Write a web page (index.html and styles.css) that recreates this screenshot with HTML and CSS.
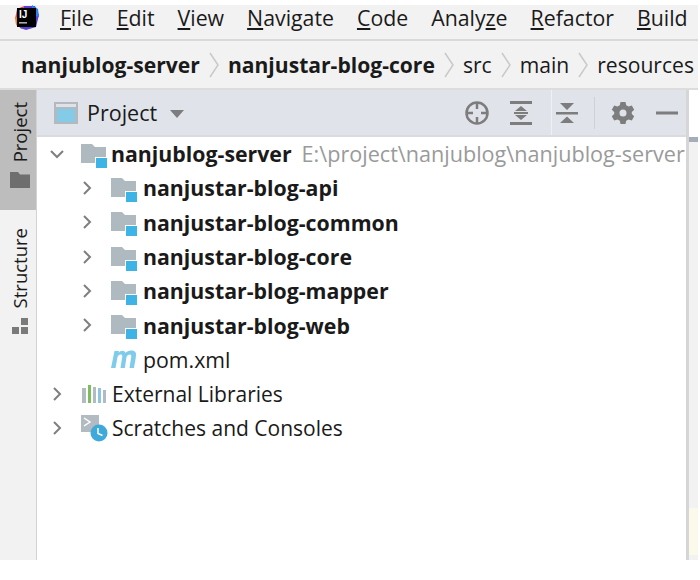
FILE: index.html
```html
<!DOCTYPE html>
<html lang="en">
<head>
<meta charset="utf-8">
<title>Project</title>
<link rel="stylesheet" href="styles.css">
</head>
<body>
<div class="window">
  <header class="menubar">
    <svg class="logo" width="28" height="26" viewBox="0 0 28 26">
      <path d="M5 4 L12 1 L10 12 L3 14 Z" fill="#f0433f"/>
      <path d="M3 13 L9 10 L10 24 L4 20 Z" fill="#f58220"/>
      <path d="M12 1 L23 1 L27 10 L24 22 L14 25 L8 23 Z" fill="#5b3fd6"/>
      <path d="M20 0 L26 4 L27 12 L20 10 Z" fill="#2f7fe8"/>
      <rect x="5" y="3" width="19" height="19" fill="#000"/>
      <text x="7" y="13" class="logo-text">IJ</text>
      <rect x="7" y="17" width="8" height="1.6" fill="#aaa"/>
    </svg>
    <nav class="menu">
      <span><u>F</u>ile</span><span><u>E</u>dit</span><span><u>V</u>iew</span><span><u>N</u>avigate</span><span><u>C</u>ode</span><span>Analy<u>z</u>e</span><span><u>R</u>efactor</span><span><u>B</u>uild</span>
    </nav>
  </header>
  <div class="crumbs">
    <b>nanjublog-server</b>
    <svg class="sep" width="12" height="26" viewBox="0 0 12 26"><path d="M2 1 L10 13 L2 25" /></svg>
    <b>nanjustar-blog-core</b>
    <svg class="sep" width="12" height="26" viewBox="0 0 12 26"><path d="M2 1 L10 13 L2 25" /></svg>
    <span>src</span>
    <svg class="sep" width="12" height="26" viewBox="0 0 12 26"><path d="M2 1 L10 13 L2 25" /></svg>
    <span>main</span>
    <svg class="sep" width="12" height="26" viewBox="0 0 12 26"><path d="M2 1 L10 13 L2 25" /></svg>
    <span>resources</span>
  </div>
  <div class="workspace">
    <aside class="rail">
      <div class="rail-tab active">
        <span class="rail-label">Project</span>
        <svg width="20" height="16" viewBox="0 0 20 16"><path d="M0 0 H8 L10 2.500 H20 V16 H0 Z" fill="#6e6e6e"/></svg>
      </div>
      <div class="rail-tab">
        <span class="rail-label">Structure</span>
        <svg width="17" height="17" viewBox="0 0 17 17"><path d="M9 0 H16 V7 H9 Z M0 9 H7 V16 H0 Z M9 9 H16 V16 H9 Z" fill="#7a7a7a"/></svg>
      </div>
    </aside>
    <main class="panel">
      <div class="panel-head">
        <svg class="head-icon" width="26" height="24" viewBox="0 0 26 24">
          <rect x="1" y="1" width="24" height="22" fill="#b3b9bf"/>
          <rect x="3" y="3" width="20" height="3" fill="#dfe2e8"/>
          <rect x="4" y="8" width="18" height="13" fill="#84cbe8"/>
        </svg>
        <span class="head-title">Project</span>
        <svg class="caret" width="16" height="8" viewBox="0 0 16 8"><path d="M1 0 H15 L8 8 Z" fill="#7d7d7d"/></svg>
        <span class="head-divider"></span>
        <div class="tools">
          <svg class="tool-target" width="26" height="26" viewBox="0 0 26 26" fill="none" stroke="#7d7d7d" stroke-width="2.500"><circle cx="13" cy="13" r="10.500"/><path d="M13 3 V9 M13 17 V23 M3 13 H9 M17 13 H23"/></svg>
          <svg class="tool-expand" width="24" height="26" viewBox="0 0 24 26" fill="#7d7d7d"><rect x="1" y="1" width="22" height="3"/><rect x="1" y="22" width="22" height="3"/><rect x="5" y="12" width="14" height="2"/><path d="M12 6 L18 11 H6 Z M12 20 L18 15 H6 Z"/></svg>
          <svg class="tool-collapse" width="24" height="26" viewBox="0 0 24 26" fill="#7d7d7d"><rect x="1" y="12" width="22" height="2.500"/><path d="M5 3 H19 L12 10 Z M5 23 H19 L12 16.500 Z"/></svg>
          <span class="tool-sep"></span>
          <svg class="tool-gear" width="24" height="24" viewBox="0 0 24 24"><path fill="#7d7d7d" fill-rule="evenodd" d="M9.500 1 H14.500 L15.200 4.200 L17.600 5.600 L20.800 4.600 L23.200 8.800 L20.800 11 V13 L23.200 15.200 L20.800 19.400 L17.600 18.400 L15.200 19.800 L14.500 23 H9.500 L8.800 19.800 L6.400 18.400 L3.200 19.400 L0.800 15.200 L3.200 13 V11 L0.800 8.800 L3.200 4.600 L6.400 5.600 L8.800 4.200 Z M12 8.500 A3.500 3.500 0 1 0 12 15.500 A3.500 3.500 0 1 0 12 8.500 Z"/></svg>
          <svg class="tool-min" width="22" height="4" viewBox="0 0 22 4"><rect width="22" height="3" y="0.500" fill="#7d7d7d"/></svg>
        </div>
      </div>
      <ul class="tree">
        <li class="row depth0">
          <svg class="chev" width="16" height="16" viewBox="0 0 16 16"><path d="M2 5 L8 11 L14 5"/></svg>
          <svg class="ico" width="26" height="28" viewBox="0 0 26 28"><path class="folder" d="M0 4 H11 L14 7 H25 V23 H0 Z"/><rect class="mod-border" x="14" y="17" width="12" height="11"/><rect class="mod" x="15" y="18" width="11" height="10"/></svg>
          <b class="name root">nanjublog-server</b><span class="path">E:\project\nanjublog\nanjublog-server</span>
        </li>
        <li class="row depth1">
          <svg class="chev" width="16" height="16" viewBox="0 0 16 16"><path d="M5 2 L11 8 L5 14"/></svg>
          <svg class="ico" width="26" height="28" viewBox="0 0 26 28"><path class="folder" d="M0 4 H11 L14 7 H25 V23 H0 Z"/><rect class="mod-border" x="14" y="17" width="12" height="11"/><rect class="mod" x="15" y="18" width="11" height="10"/></svg>
          <b class="name">nanjustar-blog-api</b>
        </li>
        <li class="row depth1">
          <svg class="chev" width="16" height="16" viewBox="0 0 16 16"><path d="M5 2 L11 8 L5 14"/></svg>
          <svg class="ico" width="26" height="28" viewBox="0 0 26 28"><path class="folder" d="M0 4 H11 L14 7 H25 V23 H0 Z"/><rect class="mod-border" x="14" y="17" width="12" height="11"/><rect class="mod" x="15" y="18" width="11" height="10"/></svg>
          <b class="name">nanjustar-blog-common</b>
        </li>
        <li class="row depth1">
          <svg class="chev" width="16" height="16" viewBox="0 0 16 16"><path d="M5 2 L11 8 L5 14"/></svg>
          <svg class="ico" width="26" height="28" viewBox="0 0 26 28"><path class="folder" d="M0 4 H11 L14 7 H25 V23 H0 Z"/><rect class="mod-border" x="14" y="17" width="12" height="11"/><rect class="mod" x="15" y="18" width="11" height="10"/></svg>
          <b class="name">nanjustar-blog-core</b>
        </li>
        <li class="row depth1">
          <svg class="chev" width="16" height="16" viewBox="0 0 16 16"><path d="M5 2 L11 8 L5 14"/></svg>
          <svg class="ico" width="26" height="28" viewBox="0 0 26 28"><path class="folder" d="M0 4 H11 L14 7 H25 V23 H0 Z"/><rect class="mod-border" x="14" y="17" width="12" height="11"/><rect class="mod" x="15" y="18" width="11" height="10"/></svg>
          <b class="name">nanjustar-blog-mapper</b>
        </li>
        <li class="row depth1">
          <svg class="chev" width="16" height="16" viewBox="0 0 16 16"><path d="M5 2 L11 8 L5 14"/></svg>
          <svg class="ico" width="26" height="28" viewBox="0 0 26 28"><path class="folder" d="M0 4 H11 L14 7 H25 V23 H0 Z"/><rect class="mod-border" x="14" y="17" width="12" height="11"/><rect class="mod" x="15" y="18" width="11" height="10"/></svg>
          <b class="name">nanjustar-blog-web</b>
        </li>
        <li class="row depth1">
          <span class="chev-gap"></span>
          <svg class="ico" width="26" height="28" viewBox="0 0 26 28"><path d="M0 23 L3.500 6 H8 L7.700 8 C9.500 5 13.500 5 14.500 8 C16.500 5 25.500 4 25 10 C24.800 14 23.500 19 23 23 H18.500 L20.300 11.500 C20.500 8.800 17 9 15.500 12 L13.800 23 H9.500 L11.300 11.500 C11.500 8.800 8 9 6.500 12 L4.500 23 Z" fill="#7fcbeb"/></svg>
          <span class="name">pom.xml</span>
        </li>
        <li class="row depth0">
          <svg class="chev" width="16" height="16" viewBox="0 0 16 16"><path d="M5 2 L11 8 L5 14"/></svg>
          <svg class="ico" width="26" height="24" viewBox="0 0 26 24"><rect x="1" y="6" width="4" height="15" fill="#b3bbc2"/><rect x="7" y="3" width="3" height="18" fill="#7cbf5a"/><rect x="12" y="5" width="3" height="16" fill="#b3bbc2"/><rect x="17" y="6" width="3" height="15" fill="#8cc4e4"/><rect x="22" y="8" width="3" height="13" fill="#b3bbc2"/></svg>
          <span class="name">External Libraries</span>
        </li>
        <li class="row depth0">
          <svg class="chev" width="16" height="16" viewBox="0 0 16 16"><path d="M5 2 L11 8 L5 14"/></svg>
          <svg class="ico wide" width="27" height="27" viewBox="0 0 27 27"><path d="M0 0 H18 V17 H0 Z" fill="#b3bbc2"/><path d="M3 3 L9 7 L3 11" fill="none" stroke="#fff" stroke-width="1.500"/><circle cx="18" cy="18" r="8.500" fill="#3fa9dc"/><path d="M17 13 V18.500 L21.500 20.500" fill="none" stroke="#fff" stroke-width="1.500"/></svg>
          <span class="name">Scratches and Consoles</span>
        </li>
      </ul>
    </main>
    <div class="edge">
      <div class="edge-top"></div>
      <div class="edge-mid"></div>
      <div class="edge-note"></div>
      <div class="edge-end"></div>
    </div>
  </div>
</div>
</body>
</html>
```
FILE: styles.css
```css
* { box-sizing: border-box; }
html, body { margin: 0; padding: 0; background: #fff; }
body { font-family: "Open Sans", "Noto Sans", sans-serif; color: #1a1a1a; }
.window { width: 698px; margin-top: 5px; display: flex; flex-direction: column; height: 555px; background: #f2f2f2; }
.menubar { height: 34px; flex: none; display: flex; align-items: flex-start; padding-left: 12px; background: #f2f2f2; }
.logo { flex: none; }
.logo-text { font: bold 10px "Liberation Sans", sans-serif; fill: #fff; }
.menu { display: flex; gap: 23px; margin-left: 20px; font-size: 21.300px; line-height: 25px; }
.crumbs { height: 51px; flex: none; border-top: 2px solid #d9d9d9; border-bottom: 2px solid #dcdcdc; display: flex; align-items: center; gap: 8px; padding-left: 21px; font-size: 21.100px; white-space: nowrap; background: #f2f2f2; }
.sep { fill: none; stroke: #c9c9c9; stroke-width: 1.500; flex: none; }
.workspace { flex: 1; display: flex; min-height: 0; }
.rail { width: 37px; flex: none; background: #f2f2f2; border-right: 1px solid #d2d2d2; }
.rail-tab { display: flex; flex-direction: column; align-items: center; gap: 10px; padding: 18px 0 0 4px; }
.rail-tab.active { background: #bdbdbd; width: 36px; height: 120px; padding-top: 12px; }
.rail-label { writing-mode: vertical-rl; transform: rotate(180deg); font-size: 18.500px; line-height: 22px; }
.panel { flex: 1; min-width: 0; background: #fff; border-right: 3px solid #d6d6d6; }
.panel-head { height: 47px; display: flex; align-items: center; padding-left: 16px; background: #e0e3ea; border-bottom: 2px solid #d9dbe0; position: relative; }
.head-title { font-size: 21.500px; margin-left: 8px; }
.caret { margin-left: 12px; margin-top: 2px; }
.head-divider { position: absolute; left: 514px; top: 0; bottom: 0; width: 1px; background: #eef0f4; }
.tools { position: absolute; left: 427px; top: 1px; height: 44px; display: flex; align-items: center; }
.tool-expand { margin-left: 19px; }
.tool-collapse { margin-left: 22px; }
.tool-sep { width: 1px; height: 32px; background: #cfd1d6; margin-left: 15px; }
.tool-gear { margin-left: 16px; }
.tool-min { margin-left: 21px; }
.tree { list-style: none; margin: -0.500px 0 0; padding: 0; }
.row { height: 34.300px; display: flex; align-items: center; font-size: 21.300px; white-space: nowrap; }
.depth0 { padding-left: 12px; font-size: 21px; }
.depth1 { padding-left: 42px; }
.chev { fill: none; stroke: #7f7f7f; stroke-width: 2; flex: none; width: 16px; }
.chev-gap { width: 16px; flex: none; }
.ico { margin-left: 16px; flex: none; }
.folder { fill: #aeb9c0; }
.mod-border { fill: #fff; }
.mod { fill: #3db3e6; }
.name { margin-left: 6px; }
.depth0 .name { margin-left: 5px; }
.depth0 .root { margin-left: 4px; font-size: 21.300px; }
.depth0 .wide + .name { margin-left: 4px; }
.path { margin-left: 10px; color: #9a9a9a; font-size: 21.600px; }
.edge { width: 9px; flex: none; display: flex; flex-direction: column; background: #f2f2f2; }
.edge-top { height: 47px; background: #fff; }
.edge-mid { height: 5px; background: #a6adba; }
.edge-note { margin-top: auto; height: 47px; background: #fbf9ea; }
.edge-end { height: 5px; }
```
